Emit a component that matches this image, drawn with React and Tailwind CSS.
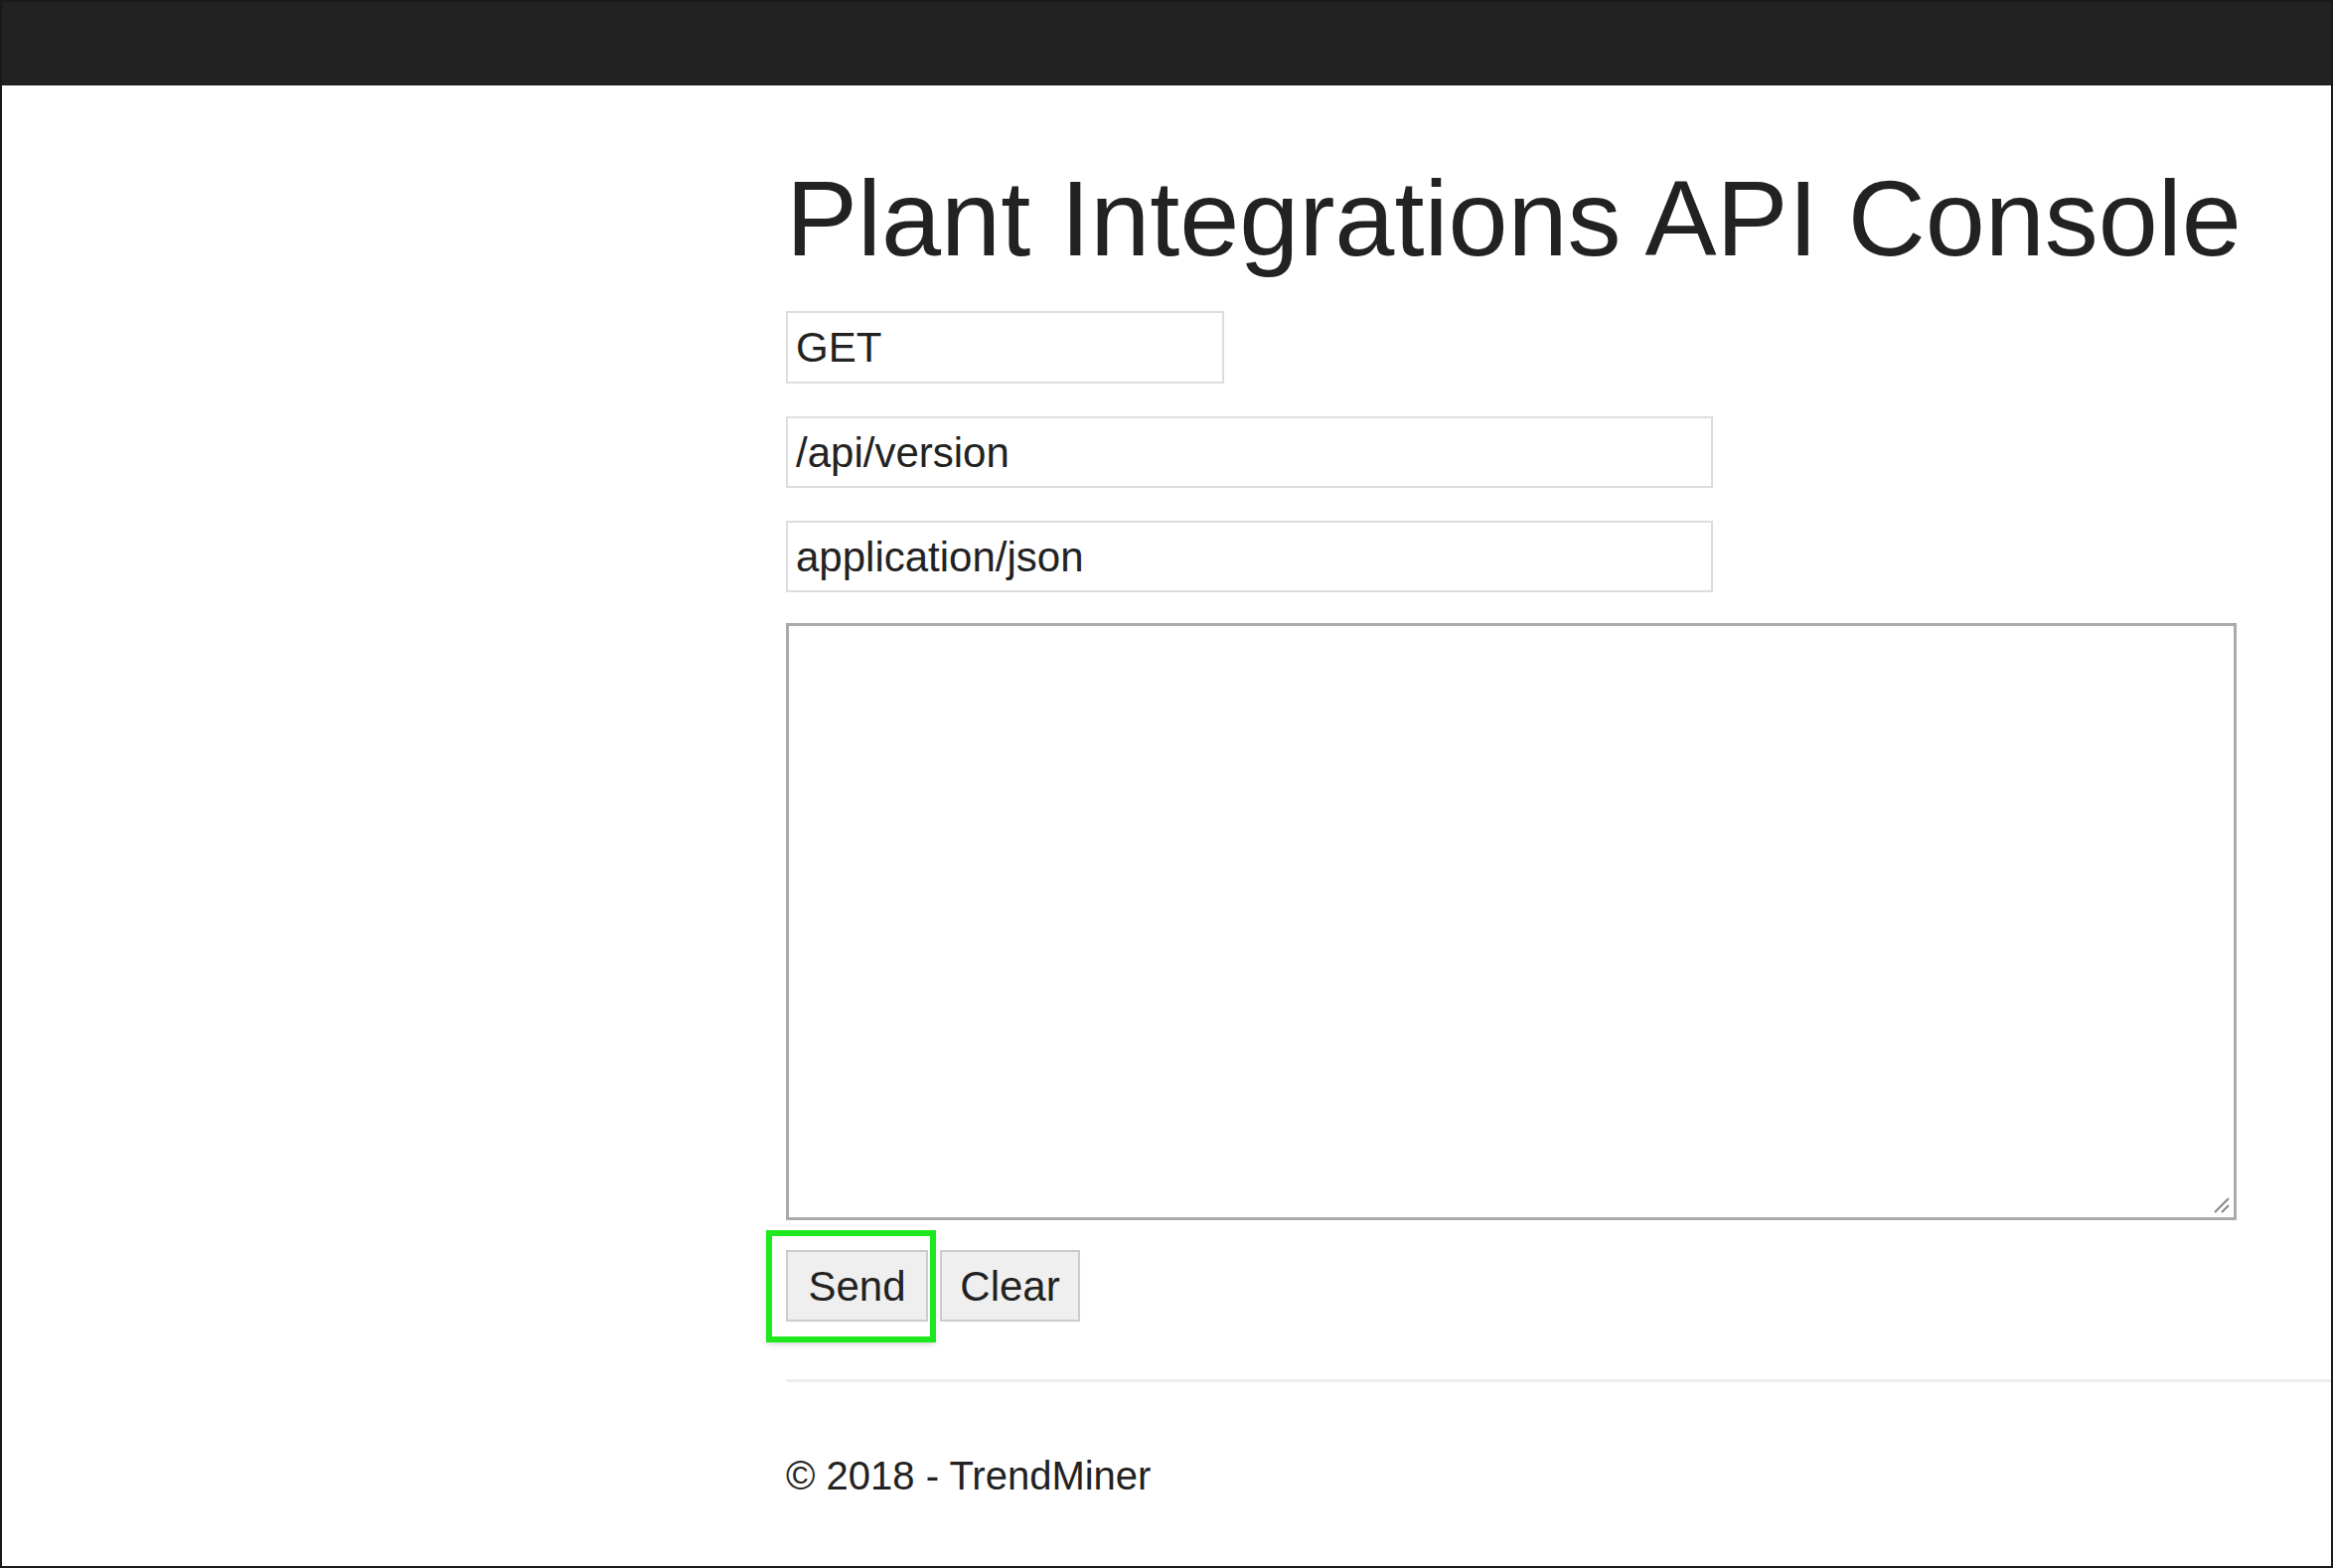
export default function App() {
  const f = { fontFamily: '"Liberation Sans", Arial, sans-serif' };
  return (
    <div style={f} className="w-[2348px] h-[1578px] border-2 border-[#1a1a1a] bg-white text-[#333] overflow-hidden flex flex-col">
      <div className="h-[84px] bg-[#222] shrink-0" />
      <div className="pl-[789px] flex flex-col">
        <h1 className="text-[108px] leading-none mt-[80px] text-[#222] whitespace-nowrap">Plant Integrations API Console</h1>
        <div className="mt-[39px] w-[441px] h-[73px] border-2 border-[#ddd] flex items-center px-[8px] text-[42px] text-[#222]">GET</div>
        <div className="mt-[33px] w-[933px] h-[72px] border-2 border-[#ddd] flex items-center px-[8px] text-[42px] text-[#222]">/api/version</div>
        <div className="mt-[33px] w-[933px] h-[72px] border-2 border-[#ddd] flex items-center px-[8px] text-[42px] text-[#222]">application/json</div>
        <div className="mt-[31px] w-[1460px] h-[601px] border-[3px] border-[#aaa] relative">
          <svg className="absolute right-[3px] bottom-[3px]" width="22" height="22" viewBox="0 0 22 22">
            <path d="M20 6 L6 20 M20 13 L13 20" stroke="#888" strokeWidth="2" />
          </svg>
        </div>
        <div className="mt-[30px] flex gap-[12px] items-start">
          <div className="relative">
            <div className="w-[143px] h-[72px] bg-[#efefef] border-2 border-[#ccc] flex items-center justify-center text-[42px] text-[#222]">Send</div>
            <div className="absolute left-[-20px] top-[-20px] w-[171px] h-[113px] border-[6px] border-[#1ee81e] shadow-md" />
          </div>
          <div className="w-[141px] h-[72px] bg-[#efefef] border-2 border-[#ccc] flex items-center justify-center text-[42px] text-[#222]">Clear</div>
        </div>
        <div className="mt-[58px] h-[3px] bg-[#eee] w-full" />
        <div className="mt-[64px] text-[40px] text-[#222]">© 2018 - TrendMiner</div>
      </div>
    </div>
  );
}
